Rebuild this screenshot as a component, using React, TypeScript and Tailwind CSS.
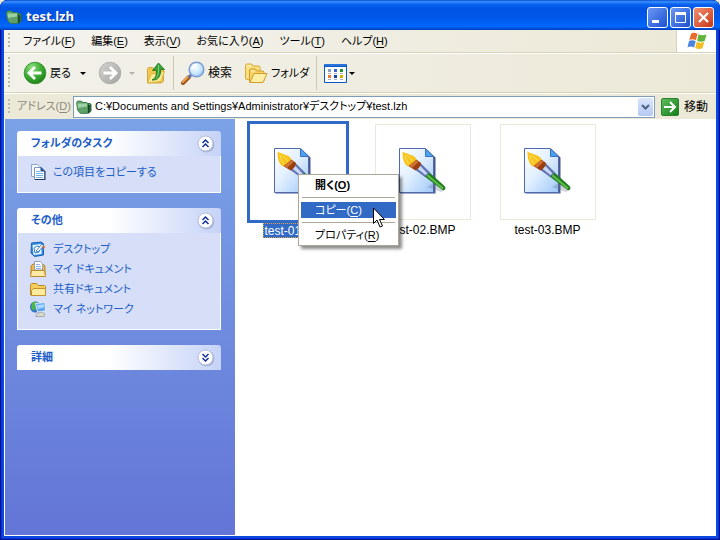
import type { ReactNode } from "react";

function ArchiveIcon({ className }: { className: string }) {
  return (
    <svg viewBox="0 0 16 14" className={className} aria-hidden="true">
      <path d="M4 3l1-1h4l1 1h4l1.500 1.500V11L13 13.500H5z" fill="#2f6a3c" />
      <path d="M4 3h6l1 1h3v1H4z" fill="#7fbd86" />
      <path d="M.5 3l1-2h4l1.200 1.500H11l1 1v9l-1 .8H4L1.500 10z" fill="#5fa069" stroke="#3b7a47" strokeWidth=".8" />
      <path d="M1.500 3.500h9.500v3L2 8z" fill="#9dd0a2" />
      <path d="M12 4l1.500 1v7L12 13z" fill="#1b4526" />
    </svg>
  );
}

function BackIcon() {
  return (
    <svg viewBox="0 0 24 24" className="size-6" aria-hidden="true">
      <defs>
        <radialGradient id="back" cx=".35" cy=".25" r=".85">
          <stop offset="0" stopColor="#8fe07f" />
          <stop offset=".5" stopColor="#3fae36" />
          <stop offset="1" stopColor="#197a14" />
        </radialGradient>
      </defs>
      <circle cx="12" cy="12" r="10.800" fill="url(#back)" stroke="#2c8a22" strokeWidth=".8" />
      <path d="M12 6l-6 6 6 6M6.500 12h12" fill="none" stroke="#fff" strokeWidth="2.800" />
    </svg>
  );
}

function ForwardIcon() {
  return (
    <svg viewBox="0 0 24 24" className="size-6" aria-hidden="true">
      <defs>
        <linearGradient id="fwd" x1="0" y1="0" x2="1" y2="1">
          <stop offset="0" stopColor="#d4d4d0" />
          <stop offset="1" stopColor="#a2a2a0" />
        </linearGradient>
      </defs>
      <circle cx="12" cy="12" r="10.800" fill="url(#fwd)" stroke="#a8a8a4" strokeWidth=".8" />
      <path d="M12 6l6 6-6 6M17.500 12h-12" fill="none" stroke="#fff" strokeWidth="2.800" />
    </svg>
  );
}

function UpFolderIcon() {
  return (
    <svg viewBox="0 0 20 22" className="h-[22px] w-5" aria-hidden="true">
      <path d="M1.500 7l1-1.500h4l1 1.500h9l1 1v11l-2 2h-14z" fill="#f3c84f" stroke="#c99a25" strokeWidth=".8" />
      <path d="M1.500 21l3.500-9 13.500-2.500-3.500 10z" fill="#fdeb94" stroke="#d5a832" strokeWidth=".8" />
      <path d="M6 18c3-1 4.500-4 4.500-9.500H6.500L12.500 1l6 6.500h-4c.5 7-2.500 11-8.500 10.500z" fill="#38a236" stroke="#1b6f1c" strokeWidth=".8" />
      <path d="M12.500 3v5c0 4-.8 6.500-2.500 8.500" fill="none" stroke="#7bd277" />
    </svg>
  );
}

function SearchIcon() {
  return (
    <svg viewBox="0 0 24 24" className="size-6" aria-hidden="true">
      <defs>
        <radialGradient id="lens" cx=".4" cy=".35" r=".7">
          <stop offset="0" stopColor="#fff" />
          <stop offset=".6" stopColor="#c8e8fc" />
          <stop offset="1" stopColor="#8ec3ee" />
        </radialGradient>
      </defs>
      <path d="M2 22l6-6" stroke="#9b5519" strokeWidth="4" strokeLinecap="round" />
      <path d="M1.800 21l6-6" stroke="#f0a04a" strokeWidth="2" strokeLinecap="round" />
      <path d="M7.500 16.500l3-3" stroke="#6678a8" strokeWidth="3" />
      <circle cx="15.500" cy="8.500" r="7.300" fill="url(#lens)" stroke="#7d9cd6" strokeWidth="1.500" />
      <path d="M11 8c0-3 2-4.500 5-4.500" stroke="#fff" strokeWidth="1.500" fill="none" />
    </svg>
  );
}

function FoldersIcon() {
  return (
    <svg viewBox="0 0 24 22" className="h-[22px] w-6" aria-hidden="true">
      <path d="M1.500 17V3l1-1h5l1.500 2h6l1 1v5L6 18z" fill="#fbe081" stroke="#d8a838" />
      <path d="M5.500 20V8l1-1h5l1.500 2h6l1 1v9z" fill="#f7d368" stroke="#cf9c29" />
      <path d="M6 20.500l4-9h13l-4 9z" fill="#fdeea6" stroke="#cf9c29" />
      <path d="M3 4h4M7.500 9h3" stroke="#fff8d8" />
    </svg>
  );
}

function ViewsIcon() {
  const cells: [number, number, string][] = [
    [4, 5, "#8aa2b8"], [10, 5, "#3c62d6"], [16, 5, "#1f9a2e"],
    [4, 11, "#f07832"], [10, 11, "#1c3ea6"], [16, 11, "#e0b000"],
  ];
  return (
    <svg viewBox="0 0 23 19" className="h-[19px] w-[23px]" aria-hidden="true">
      <rect width="23" height="19" rx="1" fill="#0a57c8" />
      <rect x="1" y="3" width="21" height="15" fill="#fff" />
      <path d="M1 1h21" stroke="#4b94f0" />
      {cells.map(([x, y, fill]) => (
        <g key={`${x}-${y}`}>
          <rect x={x} y={y} width="3" height="3" fill={fill} />
          <path d={`M${x} ${y + 4.5}h3`} stroke="#a9b2c0" />
        </g>
      ))}
    </svg>
  );
}

function GoIcon() {
  return (
    <svg viewBox="0 0 18 18" className="size-[18px]" aria-hidden="true">
      <defs>
        <linearGradient id="go" x1="0" y1="0" x2="1" y2="1">
          <stop offset="0" stopColor="#62bf60" />
          <stop offset="1" stopColor="#0f7c16" />
        </linearGradient>
      </defs>
      <rect x=".5" y=".5" width="17" height="17" rx="1.500" fill="url(#go)" stroke="#2c8130" />
      <path d="M3 9h11M9 4l5 5-5 5" fill="none" stroke="#fff" strokeWidth="2" />
    </svg>
  );
}

function WindowsFlag() {
  return (
    <svg viewBox="0 0 20 18" className="h-[18px] w-5" aria-hidden="true">
      <path d="M4 2c2-2 4-1.500 6.500-.2L9 8.300C6.500 7 4.500 7 2.300 8z" fill="#ea6a2c" />
      <path d="M11.500 2.300c2.500 1.200 5 1.300 8 .2L17.700 9c-2.700 1-5 .9-7.500-.3z" fill="#5fb53c" />
      <path d="M2 9c2.200-1.200 4.500-1 6.700.2L7 15.500c-2-1.200-4-1.300-6.500-.3z" fill="#4a83dd" />
      <path d="M9.800 9.800c2.500 1.200 4.700 1.200 7.500.2l-1.800 6.300c-2.700 1.200-5 .9-7.300-.4z" fill="#f4bd24" />
    </svg>
  );
}

function CopyIcon() {
  return (
    <svg viewBox="0 0 16 16" className="size-4" aria-hidden="true">
      <path d="M1.500.5h6l2 2v10h-8z" fill="#f4f8ff" stroke="#8ea4c4" />
      <path d="M4.500 3.500h7l3 3v9h-10z" fill="#fff" stroke="#7f98be" />
      <path d="M10.500 2.500l5 5h-5z" fill="#2a5596" />
      <path d="M6 7.500h4M6 9.500h7M6 11.500h7M6 13.500h7" stroke="#6db4f2" />
      <path d="M15 7v9M5 15.500h10" stroke="#1d355f" />
    </svg>
  );
}

function DesktopIcon() {
  return (
    <svg viewBox="0 0 16 16" className="size-4" aria-hidden="true">
      <path d="M1.500 2l10-1 2 2v11l-9 1.500L1 12z" fill="#2e8ae0" stroke="#1b62b6" />
      <path d="M2.500 4l9-1v10l-8 1z" fill="#e8f6ff" />
      <path d="M4 7l3-2 3 1-1 5-4 1z" fill="#fff" stroke="#2f86d6" />
      <path d="M6 10l6-7 2 1.500-6 6.500z" fill="#fff" stroke="#235aa0" strokeWidth=".8" />
      <path d="M12 4.500l3.500 1.500-2 2z" fill="#e46a22" />
    </svg>
  );
}

function DocumentsIcon() {
  return (
    <svg viewBox="0 0 16 16" className="size-4" aria-hidden="true">
      <path d="M1 14V5l2-2h10l2 2v9z" fill="#eebb4b" stroke="#b9842a" />
      <path d="M4.500 9V.5h6l2 2V9z" fill="#fff" stroke="#8fa0b8" />
      <path d="M6 3.500h4M6 5.500h5M6 7.500h5" stroke="#8ab4e8" />
      <path d="M.5 15.500l1-6h13l1 6z" fill="#fdeaa4" stroke="#c08b2c" />
    </svg>
  );
}

function FolderIcon() {
  return (
    <svg viewBox="0 0 16 16" className="size-4" aria-hidden="true">
      <path d="M.5 14V3.500l1-1h5l2 2h6l1 1V14z" fill="#f4cd5c" stroke="#bb8b29" />
      <path d="M1.500 14.500v-5l2-2h12v7z" fill="#fdeb9e" stroke="#c2922d" />
    </svg>
  );
}

function NetworkIcon() {
  return (
    <svg viewBox="0 0 16 16" className="size-4" aria-hidden="true">
      <circle cx="5.500" cy="6" r="5.500" fill="#2e6fd0" />
      <path d="M2 2c2-2 5-1 5 0L5 4l1 3-2 3-3-3z" fill="#4cb848" />
      <path d="M5.500 2.500l9.500-1 .5 8.500-8 1z" fill="#5aa7f0" stroke="#e4edf6" />
      <path d="M7 4l7-.8v3L8 8z" fill="#a9d8ff" />
      <path d="M8 12l4-1 3 2-1 2.500H6V14z" fill="#d8d8d0" stroke="#8c8c88" strokeWidth=".6" />
    </svg>
  );
}

function BitmapIcon() {
  return (
    <svg viewBox="0 0 48 48" className="size-12" aria-hidden="true">
      <defs>
        <linearGradient id="page" x1="0" y1="0" x2="1" y2="1">
          <stop offset="0" stopColor="#fff" />
          <stop offset=".45" stopColor="#e2f0ff" />
          <stop offset="1" stopColor="#9fc8f8" />
        </linearGradient>
      </defs>
      <path d="M1.500 1.500H28l8.500 8v36h-35z" fill="#47578e" />
      <path d="M.5.500H26l8.500 8.500v35.500H.5z" fill="url(#page)" stroke="#5269ae" />
      <path d="M26.500.5v8h8z" fill="#4ba3ee" stroke="#3c6fc2" />
      <path d="M28 39l14 5 4-2-10-8z" fill="#60708f" opacity=".3" />
      <path d="M25 28l5-4 15.500 14c2 2 .5 5-2 4z" fill="#247b22" />
      <path d="M28 27l16 13.500" fill="none" stroke="#5dc048" strokeWidth="2" />
      <path d="M15 21l5.500-7L31 24.500 26 29z" fill="#5f74b2" />
      <path d="M17.500 20l3-3 8 8.500-2 1.500z" fill="#cad7f4" />
      <path d="M8.500 17.500l7.500-7 6 4.500c0 3-2.500 6-5.500 7.500z" fill="#9c3f10" />
      <path d="M10 18l7-6 2.500 2-6.500 6z" fill="#cf7034" />
      <path d="M3.500 3.500c2 2 4 1 7 3 3 1 6 2 7 5L9 18.500C4.500 16 3.500 10 3.500 3.500z" fill="#f9c51c" />
      <path d="M6 7c1 4 2 7 4 9M8 7c2 2 4 4 6 6" fill="none" stroke="#fde36b" />
    </svg>
  );
}

function Grip({ className }: { className: string }) {
  return (
    <span
      className={`w-[3px] shrink-0 bg-[radial-gradient(circle_at_1px_1px,#bdb9a6_1px,transparent_1px)] bg-[size:3px_4px] ${className}`}
    />
  );
}

function Caret({ muted = false }: { muted?: boolean }) {
  return (
    <svg viewBox="0 0 6 3" className="h-[3px] w-1.5" aria-hidden="true">
      <path d="M0 0h6L3 3z" fill={muted ? "#b5b3a8" : "#000"} />
    </svg>
  );
}

const menus: [string, string][] = [
  ["ファイル", "F"],
  ["編集", "E"],
  ["表示", "V"],
  ["お気に入り", "A"],
  ["ツール", "T"],
  ["ヘルプ", "H"],
];

function Mnemonic({ text, letter }: { text: string; letter: string }) {
  return (
    <>
      {text}(<u className="underline-offset-2">{letter}</u>)
    </>
  );
}

function Panel({ title, open, children }: { title: string; open: boolean; children?: ReactNode }) {
  return (
    <section>
      <h2>
        <button
          type="button"
          aria-expanded={open}
          className="flex h-[25px] w-full items-center justify-between rounded-t-[3px] bg-linear-to-r from-white from-45% to-[#c6d3f7] pr-1.5 pl-3.5 font-bold text-[#215dc6]"
        >
          {title}
          <svg viewBox="0 0 18 18" className="size-[18px]" aria-hidden="true">
            <circle cx="9.500" cy="9.500" r="8" fill="#8a98bd" opacity=".5" />
            <circle cx="8.500" cy="8.500" r="7.500" fill="#fff" stroke="#b0bbda" />
            <path
              d={open ? "M5.500 8l3-3 3 3M5.500 12l3-3 3 3" : "M5.500 5l3 3 3-3M5.500 9l3 3 3-3"}
              fill="none"
              stroke="#0f3291"
              strokeWidth="1.500"
            />
          </svg>
        </button>
      </h2>
      {open && <ul className="border border-t-0 border-white bg-[#d6dff7] pt-1.5 pb-2.5 pl-3">{children}</ul>}
    </section>
  );
}

function Task({ icon, children }: { icon: ReactNode; children: string }) {
  return (
    <li>
      <a href="#" className="flex h-5 items-center gap-[7px] text-[#215dc6]">
        {icon}
        {children}
      </a>
    </li>
  );
}

function FileTile({ name, selected = false }: { name: string; selected?: boolean }) {
  return (
    <button type="button" className="flex w-[125px] flex-col items-center gap-[3px]">
      <span
        className={`flex size-24 items-center justify-center border bg-white ${
          selected ? "border-white ring-3 ring-[#316ac5]" : "border-[#ece9d8]"
        }`}
      >
        <BitmapIcon />
      </span>
      <span
        className={`h-[15px] text-[12px] leading-[14px] ${
          selected ? "border border-dotted border-[#e0a050] bg-[#316ac5] text-white" : ""
        }`}
      >
        {name}
      </span>
    </button>
  );
}

const captionButton =
  "flex size-[21px] items-center justify-center rounded-[3px] border border-white bg-linear-to-br";

export default function App() {
  return (
    <div className="bg-[#ece9d8]">
      <div className="relative flex min-h-screen flex-col rounded-t-lg bg-[#0a48e0] px-1 pb-1 font-['Liberation_Sans','Noto_Sans_CJK_JP',sans-serif] text-[11px] text-black shadow-[inset_0_0_0_1px_#00138c,inset_0_0_0_2px_#0831d9] [font-feature-settings:'palt']">
        <header className="-mx-1 flex h-[30px] items-center rounded-t-lg bg-[linear-gradient(#0a4ad0_0%,#3a93ff_6%,#0a62f0_14%,#0054e3_28%,#0058ea_60%,#0068ff_88%,#0050d8_95%,#003dbb_100%)] px-1.5 pt-1">
          <ArchiveIcon className="h-[14px] w-4" />
          <h1 className="ml-1 flex-1 font-['Noto_Sans',sans-serif] text-[13px] font-bold text-white [text-shadow:1px_1px_0_#10308a]">
            test.lzh
          </h1>
          <div className="flex gap-0.5">
            <button type="button" aria-label="最小化" className={`${captionButton} from-[#6b97f5] to-[#1c4fd0]`}>
              <svg viewBox="0 0 19 19" className="size-[19px]" aria-hidden="true">
                <path d="M4 13.500h7" stroke="#fff" strokeWidth="3" />
              </svg>
            </button>
            <button type="button" aria-label="最大化" className={`${captionButton} from-[#6b97f5] to-[#1c4fd0]`}>
              <svg viewBox="0 0 19 19" className="size-[19px]" aria-hidden="true">
                <path d="M4.500 5.500h10v9h-10z" fill="none" stroke="#fff" />
                <path d="M4 5.500h11" stroke="#fff" strokeWidth="3" />
              </svg>
            </button>
            <button type="button" aria-label="閉じる" className={`${captionButton} from-[#f09070] to-[#c83010]`}>
              <svg viewBox="0 0 19 19" className="size-[19px]" aria-hidden="true">
                <path d="M5 5l9 9M14 5l-9 9" stroke="#fff" strokeWidth="2.200" />
              </svg>
            </button>
          </div>
        </header>

        <div className="flex h-6 border-b border-white bg-[#ece9d8]">
          <nav className="flex flex-1 items-center border-r border-b border-[#d8d2bd] bg-linear-to-r from-[#f4f3ee] to-[#ece9d8] pl-1">
            <Grip className="h-4" />
            <div className="flex gap-4 pl-3">
              {menus.map(([text, letter]) => (
                <button type="button" key={letter} className="whitespace-nowrap">
                  <Mnemonic text={text} letter={letter} />
                </button>
              ))}
            </div>
          </nav>
          <div className="flex w-[39px] items-center justify-center border-b border-[#d8d2bd] bg-white">
            <WindowsFlag />
          </div>
        </div>

        <div className="flex h-[39px] items-center border-b border-[#d8d2bd] bg-linear-to-r from-[#f2f1ea] to-[#ece9d8] pl-1">
          <Grip className="h-8" />
          <button type="button" className="ml-3 flex items-center gap-[3px]">
            <BackIcon />
            <span className="w-[21px] whitespace-nowrap">戻る</span>
          </button>
          <button type="button" aria-label="戻る履歴" className="ml-[9px]">
            <Caret />
          </button>
          <button type="button" aria-label="進む" className="ml-3">
            <ForwardIcon />
          </button>
          <button type="button" aria-label="進む履歴" className="ml-[7px]">
            <Caret muted />
          </button>
          <button type="button" aria-label="上へ" className="ml-[11px]">
            <UpFolderIcon />
          </button>
          <span className="mx-[7px] h-[34px] w-px bg-[#ccc8b4]" />
          <button type="button" className="flex items-center gap-[3px]">
            <SearchIcon />
            <span className="w-6 text-[12px] whitespace-nowrap">検索</span>
          </button>
          <button type="button" className="ml-3 flex items-center gap-[3px]">
            <FoldersIcon />
            <span className="w-9 whitespace-nowrap">フォルダ</span>
          </button>
          <span className="mr-[7px] ml-[9px] h-[34px] w-px bg-[#ccc8b4]" />
          <button type="button" aria-label="表示方法" className="flex items-center gap-0.5">
            <ViewsIcon />
            <Caret />
          </button>
        </div>

        <div className="flex h-[26px] items-center border-t border-white bg-[#ece9d8] pl-1">
          <Grip className="h-4" />
          <label htmlFor="address" className="w-[62px] pl-1.5 whitespace-nowrap text-[#8c8a7e]">
            <Mnemonic text="アドレス" letter="D" />
          </label>
          <div className="flex h-[22px] flex-1 items-center border border-[#7f9db9] bg-white pr-px pl-0.5">
            <ArchiveIcon className="h-[14px] w-4" />
            <input
              id="address"
              defaultValue="C:¥Documents and Settings¥Administrator¥デスクトップ¥test.lzh"
              className="min-w-0 flex-1 pl-[3px] outline-none"
            />
            <button
              type="button"
              aria-label="アドレス一覧"
              className="flex h-[18px] w-[15px] items-center justify-center rounded-[2px] bg-linear-to-b from-[#dce6fd] to-[#b4c8f4]"
            >
              <svg viewBox="0 0 9 6" className="h-1.5 w-[9px]" aria-hidden="true">
                <path d="M1 1l3.500 3.500L8 1" fill="none" stroke="#4d6185" strokeWidth="2" />
              </svg>
            </button>
          </div>
          <button type="button" className="flex items-center gap-[5px] pr-2 pl-1.5 text-[12px] whitespace-nowrap">
            <GoIcon />
            移動
          </button>
        </div>

        <div className="flex flex-1 border-b border-l border-white bg-white">
          <aside className="flex w-[230px] shrink-0 flex-col gap-[15px] bg-linear-to-b from-[#7ba2e7] to-[#6375d6] pt-3 pr-3.5 pl-3">
            <Panel title="フォルダのタスク" open>
              <Task icon={<CopyIcon />}>この項目をコピーする</Task>
            </Panel>
            <Panel title="その他" open>
              <Task icon={<DesktopIcon />}>デスクトップ</Task>
              <Task icon={<DocumentsIcon />}>マイ ドキュメント</Task>
              <Task icon={<FolderIcon />}>共有ドキュメント</Task>
              <Task icon={<NetworkIcon />}>マイ ネットワーク</Task>
            </Panel>
            <Panel title="詳細" open={false} />
          </aside>
          <main className="flex flex-1 flex-wrap content-start pt-[5px]">
            <FileTile name="test-01.BMP" selected />
            <FileTile name="test-02.BMP" />
            <FileTile name="test-03.BMP" />
          </main>
        </div>

        <div
          role="menu"
          className="absolute top-[174px] left-[298px] w-[101px] border border-[#aca899] bg-white p-0.5 shadow-[3px_3px_3px_rgba(0,0,0,0.45)]"
        >
          <button type="button" role="menuitem" className="block h-4 w-full pl-3.5 text-left leading-4 font-bold">
            <Mnemonic text="開く" letter="O" />
          </button>
          <hr className="mx-px my-1 border-[#aca899]" />
          <button type="button" role="menuitem" className="block h-4 w-full bg-[#316ac5] pl-3.5 text-left leading-4 text-white">
            <Mnemonic text="コピー" letter="C" />
          </button>
          <hr className="mx-px my-1 border-[#aca899]" />
          <button type="button" role="menuitem" className="block h-4 w-full pl-3.5 text-left leading-4">
            <Mnemonic text="プロパティ" letter="R" />
          </button>
        </div>
        <svg viewBox="0 0 12 21" className="absolute top-[207px] left-[373px] h-[21px] w-3" aria-hidden="true">
          <path d="M.5 1v15.500l3.500-3.500 3 7 2.500-1-3-6.500h5z" fill="#fff" stroke="#000" />
        </svg>
      </div>
    </div>
  );
}
